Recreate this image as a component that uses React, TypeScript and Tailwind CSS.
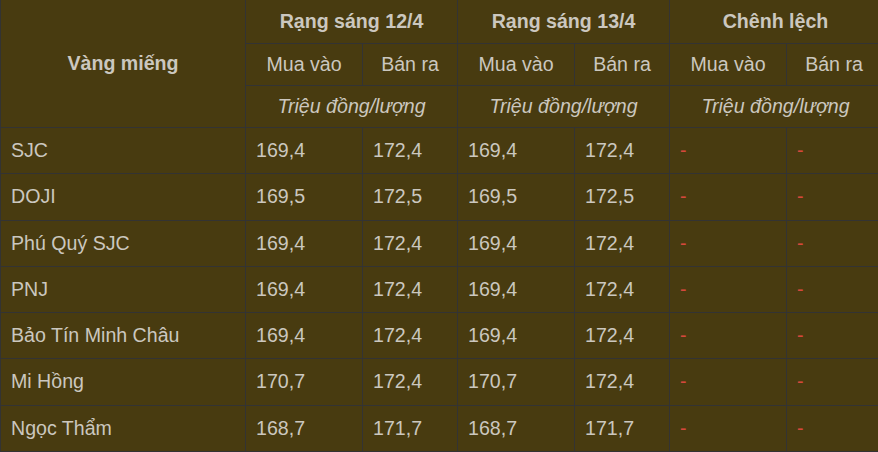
import React from "react"

const rows = [
  { name: "SJC", a: "169,4", b: "172,4", c: "169,4", d: "172,4" },
  { name: "DOJI", a: "169,5", b: "172,5", c: "169,5", d: "172,5" },
  { name: "Phú Quý SJC", a: "169,4", b: "172,4", c: "169,4", d: "172,4" },
  { name: "PNJ", a: "169,4", b: "172,4", c: "169,4", d: "172,4" },
  { name: "Bảo Tín Minh Châu", a: "169,4", b: "172,4", c: "169,4", d: "172,4" },
  { name: "Mi Hồng", a: "170,7", b: "172,4", c: "170,7", d: "172,4" },
  { name: "Ngọc Thẩm", a: "168,7", b: "171,7", c: "168,7", d: "171,7" },
]

const cell = "border border-[#333333] px-[10px]"

export default function App() {
  return (
    <div className="w-[878px] h-[452px] overflow-hidden bg-[#483b10]">
      <table
        className="-mt-px w-[881px] table-fixed border-collapse text-[19.6px] leading-normal text-[#cbc7bf] bg-[#483b10]"
        style={{ fontFamily: '"Liberation Sans", Arial, sans-serif' }}
      >
        <colgroup>
          <col className="w-[245px]" />
          <col className="w-[117px]" />
          <col className="w-[95px]" />
          <col className="w-[117px]" />
          <col className="w-[95px]" />
          <col className="w-[117px]" />
          <col className="w-[95px]" />
        </colgroup>
        <thead>
          {/* Hàng tiêu đề */}
          <tr className="h-[44px]">
            <th rowSpan={3} className={`${cell} font-bold text-center`}>
              Vàng miếng
            </th>
            <th colSpan={2} className={`${cell} font-bold text-center`}>
              Rạng sáng 12/4
            </th>
            <th colSpan={2} className={`${cell} font-bold text-center`}>
              Rạng sáng 13/4
            </th>
            <th colSpan={2} className={`${cell} font-bold text-center`}>
              Chênh lệch
            </th>
          </tr>
          <tr className="h-[42px]">
            {[0, 1, 2].map((i) => (
              <React.Fragment key={i}>
                <td className={`${cell} text-center`}>Mua vào</td>
                <td className={`${cell} text-center`}>Bán ra</td>
              </React.Fragment>
            ))}
          </tr>
          <tr className="h-[42px]">
            {[0, 1, 2].map((i) => (
              <td key={i} colSpan={2} className={`${cell} text-center italic`}>
                Triệu đồng/lượng
              </td>
            ))}
          </tr>
        </thead>
        <tbody>
          {rows.map((r) => (
            <tr key={r.name} className="h-[46.3px]">
              <td className={cell}>{r.name}</td>
              <td className={cell}>{r.a}</td>
              <td className={cell}>{r.b}</td>
              <td className={cell}>{r.c}</td>
              <td className={cell}>{r.d}</td>
              <td className={`${cell} text-[#d4483c]`}>-</td>
              <td className={`${cell} text-[#d4483c]`}>-</td>
            </tr>
          ))}
        </tbody>
      </table>
    </div>
  )
}
